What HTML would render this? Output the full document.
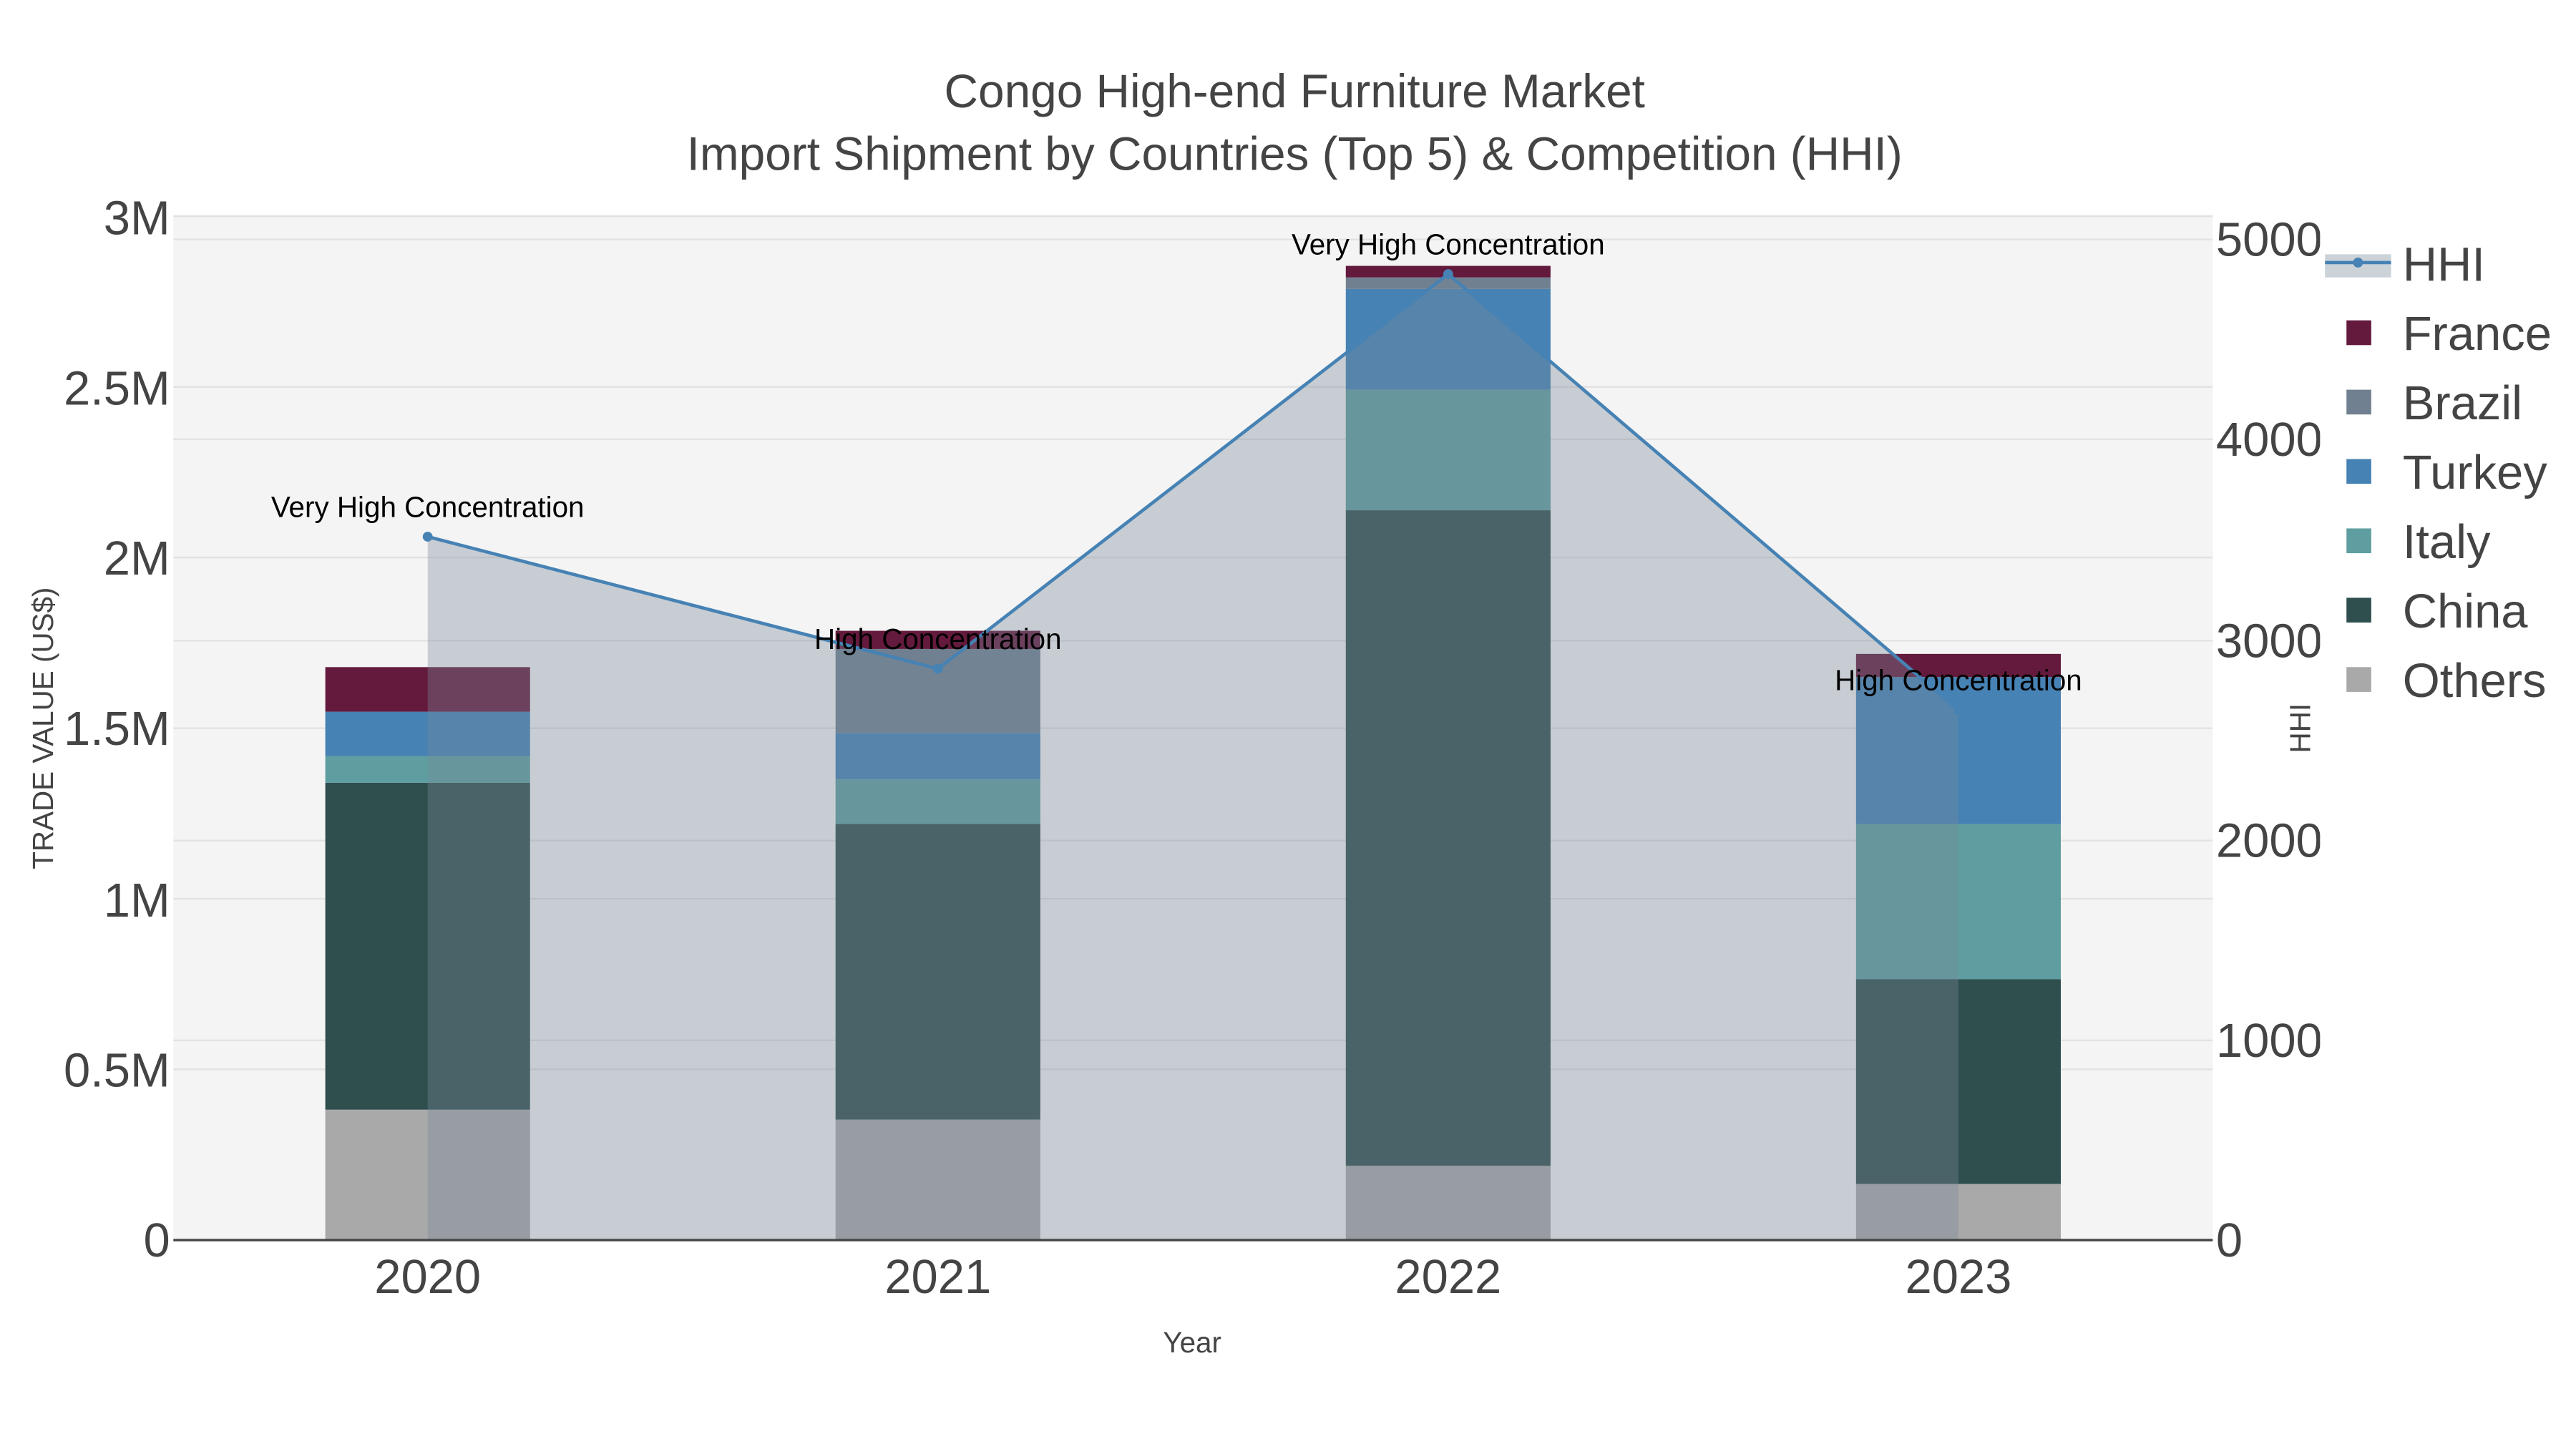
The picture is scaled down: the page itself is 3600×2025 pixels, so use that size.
<!DOCTYPE html>
<html><head><meta charset="utf-8"><style>
html,body{margin:0;padding:0;background:#fff;}
svg{display:block;font-family:"Liberation Sans",sans-serif;}
</style></head><body>
<svg width="3600" height="2025" viewBox="0 0 1560 877.5" xmlns="http://www.w3.org/2000/svg">
<rect x="0" y="0" width="1560" height="877.5" fill="#fff"/>
<rect x="105" y="130" width="1235" height="621" fill="#f4f4f4"/>
<g stroke="#e2e2e2" stroke-width="1">
<line x1="105" x2="1340" y1="647.6" y2="647.6"/>
<line x1="105" x2="1340" y1="544.3" y2="544.3"/>
<line x1="105" x2="1340" y1="441" y2="441"/>
<line x1="105" x2="1340" y1="337.6" y2="337.6"/>
<line x1="105" x2="1340" y1="234.3" y2="234.3"/>
<line x1="105" x2="1340" y1="131" y2="131"/>
<line x1="105" x2="1340" y1="630" y2="630"/>
<line x1="105" x2="1340" y1="509" y2="509"/>
<line x1="105" x2="1340" y1="388" y2="388"/>
<line x1="105" x2="1340" y1="266" y2="266"/>
<line x1="105" x2="1340" y1="145" y2="145"/>
</g>
<g>
<rect x="197" y="672" width="124" height="79" fill="#a9a9a9"/>
<rect x="197" y="474" width="124" height="198" fill="#2f4f4f"/>
<rect x="197" y="458" width="124" height="16" fill="#5f9ea0"/>
<rect x="197" y="431" width="124" height="27" fill="#4682b4"/>
<rect x="197" y="404" width="124" height="27" fill="#641a3c"/>

<rect x="506" y="678" width="124" height="73" fill="#a9a9a9"/>
<rect x="506" y="499" width="124" height="179" fill="#2f4f4f"/>
<rect x="506" y="472" width="124" height="27" fill="#5f9ea0"/>
<rect x="506" y="444" width="124" height="28" fill="#4682b4"/>
<rect x="506" y="393" width="124" height="51" fill="#708090"/>
<rect x="506" y="382" width="124" height="11" fill="#641a3c"/>

<rect x="815" y="706" width="124" height="45" fill="#a9a9a9"/>
<rect x="815" y="309" width="124" height="397" fill="#2f4f4f"/>
<rect x="815" y="236" width="124" height="73" fill="#5f9ea0"/>
<rect x="815" y="175" width="124" height="61" fill="#4682b4"/>
<rect x="815" y="168" width="124" height="7" fill="#708090"/>
<rect x="815" y="161" width="124" height="7" fill="#641a3c"/>

<rect x="1124" y="717" width="124" height="34" fill="#a9a9a9"/>
<rect x="1124" y="593" width="124" height="124" fill="#2f4f4f"/>
<rect x="1124" y="499" width="124" height="94" fill="#5f9ea0"/>
<rect x="1124" y="410" width="124" height="89" fill="#4682b4"/>
<rect x="1124" y="396" width="124" height="14" fill="#641a3c"/>
</g>
<polygon points="259,751 259,325 568,405 877,166 1186,430 1186,751" fill="rgba(119,136,153,0.36)"/>
<line x1="105" x2="1340" y1="751" y2="751" stroke="#444" stroke-width="1.5"/>
<polyline points="259,325 568,405 877,166 1186,430" fill="none" stroke="#4682b4" stroke-width="2"/>
<g fill="#4682b4"><circle cx="259" cy="325" r="3"/><circle cx="568" cy="405" r="3"/><circle cx="877" cy="166" r="3"/><circle cx="1186" cy="430" r="3"/></g>
<g font-size="17.5" fill="#000" text-anchor="middle">
<text x="259" y="313">Very High Concentration</text>
<text x="568" y="393">High Concentration</text>
<text x="877" y="154">Very High Concentration</text>
<text x="1186" y="418">High Concentration</text>
</g>
<g fill="#444" text-anchor="middle" font-size="28.5">
<text x="784" y="65">Congo High-end Furniture Market</text>
<text x="784" y="103">Import Shipment by Countries (Top 5) &amp; Competition (HHI)</text>
</g>
<g fill="#444" font-size="29" text-anchor="end">
<text x="103" y="761">0</text>
<text x="103" y="658">0.5M</text>
<text x="103" y="555">1M</text>
<text x="103" y="451">1.5M</text>
<text x="103" y="348">2M</text>
<text x="103" y="245">2.5M</text>
<text x="103" y="142">3M</text>
</g>
<svg x="1340" y="100" width="65" height="700" viewBox="1340 100 65 700" overflow="hidden">
<g fill="#444" font-size="29">
<text x="1342" y="761">0</text>
<text x="1342" y="640">1000</text>
<text x="1342" y="519">2000</text>
<text x="1342" y="398">3000</text>
<text x="1342" y="276">4000</text>
<text x="1342" y="155">5000</text>
</g>
</svg>
<g fill="#444" font-size="29" text-anchor="middle">
<text x="259" y="783">2020</text>
<text x="568" y="783">2021</text>
<text x="877" y="783">2022</text>
<text x="1186" y="783">2023</text>
</g>
<text x="722" y="819" font-size="17.5" fill="#444" text-anchor="middle">Year</text>
<text transform="translate(32,441) rotate(-90)" font-size="17.5" fill="#444" text-anchor="middle">TRADE VALUE (US$)</text>
<text transform="translate(1399,441) rotate(-90)" font-size="17.5" fill="#444" text-anchor="middle">HHI</text>
<g font-size="29" fill="#444">
<rect x="1408" y="154" width="40" height="14" fill="rgba(119,136,153,0.38)"/>
<line x1="1408" x2="1448" y1="159" y2="159" stroke="#4682b4" stroke-width="2"/>
<circle cx="1428" cy="159" r="3" fill="#4682b4"/>
<text x="1455" y="170">HHI</text>
<rect x="1421" y="194" width="15" height="15" fill="#641a3c"/><text x="1455" y="212">France</text>
<rect x="1421" y="236" width="15" height="15" fill="#708090"/><text x="1455" y="254">Brazil</text>
<rect x="1421" y="278" width="15" height="15" fill="#4682b4"/><text x="1455" y="296">Turkey</text>
<rect x="1421" y="320" width="15" height="15" fill="#5f9ea0"/><text x="1455" y="338">Italy</text>
<rect x="1421" y="362" width="15" height="15" fill="#2f4f4f"/><text x="1455" y="380">China</text>
<rect x="1421" y="404" width="15" height="15" fill="#a9a9a9"/><text x="1455" y="422">Others</text>
</g>
</svg>
</body></html>
